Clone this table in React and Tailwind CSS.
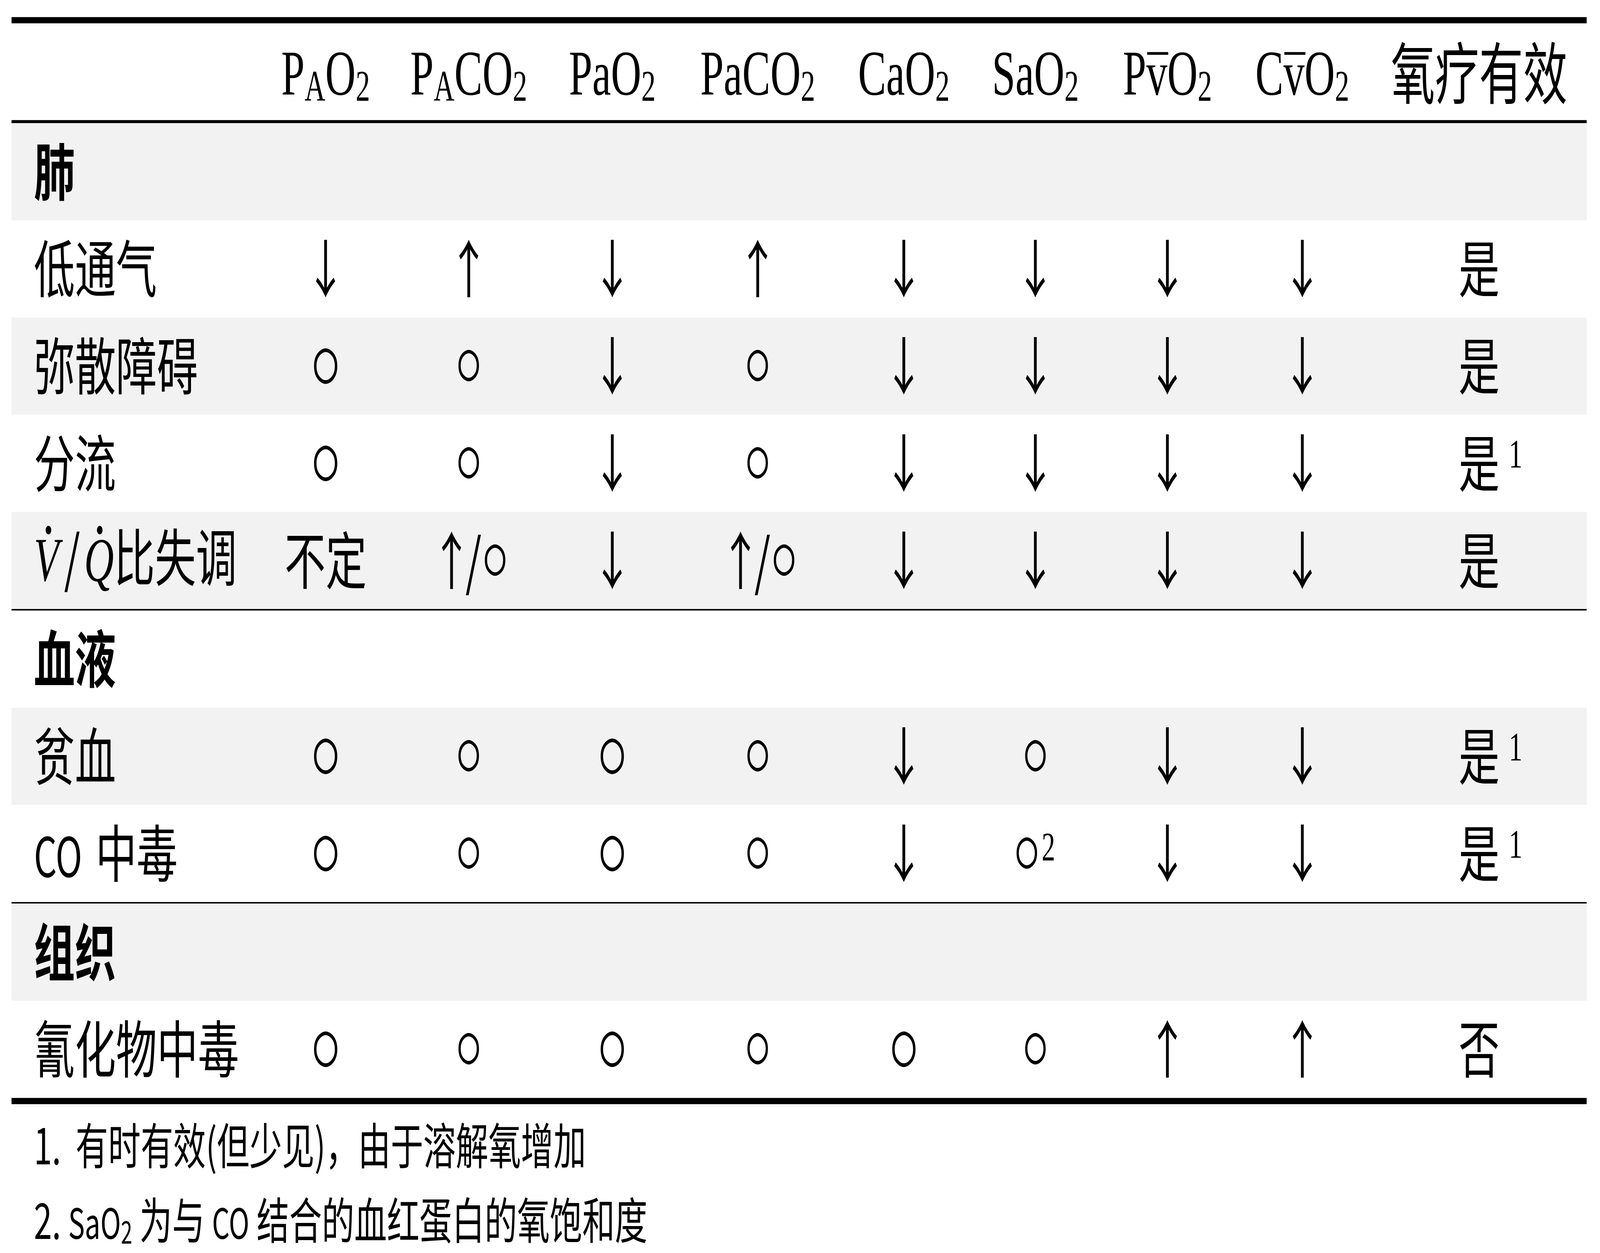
import React, { useEffect, useState } from "react";

const cjk = "font-['Noto_Sans_CJK_SC',sans-serif]";
const serif = "font-['Liberation_Serif',serif]";
const cols = "grid grid-cols-[946px_558px_558px_562px_572px_568px_458px_572px_480px_1fr]";

// the drawing is laid out on the reference's 6240 grid (3224 tall so the last
// footnote line keeps its descender); fit it to the window we actually get
function useFit() {
    const read = () =>
        typeof window === "undefined" ? [1, 1] : [window.innerWidth / 6240, window.innerHeight / 3224];
    const [fit, setFit] = useState(read);
    useEffect(() => {
        const onResize = () => setFit(read());
        window.addEventListener("resize", onResize);
        return () => window.removeEventListener("resize", onResize);
    }, []);
    return fit;
}

function Big() {
    return <span className="font-['DejaVu_Sans',sans-serif] text-[115px] [-webkit-text-stroke:3px_black]">○</span>;
}

function Small({ className = "" }) {
    return (
        <span className={`font-['DejaVu_Sans',sans-serif] text-[101px] [-webkit-text-stroke:3px_black] ${className}`}>○</span>
    );
}

function Mark({ v }) {
    if (v === "D") return <span className={cjk}>↓</span>;
    if (v === "U") return <span className={cjk}>↑</span>;
    if (v === "B") return <Big />;
    if (v === "S") return <Small />;
    if (v === "N") return <span className={cjk}>不定</span>;
    if (v === "US")
        return (
            <span className="flex items-center">
                <span className={`${cjk} tracking-[-26px]`}>↑</span>
                <span className={cjk}>/</span>
                <Small className="ml-[9px]" />
            </span>
        );
    if (v === "S2")
        return (
            <span className="flex items-center">
                <Small />
                <span className={`${serif} relative -top-[8px] ml-[14px] text-[105px]`}>2</span>
            </span>
        );
    return null;
}

function Answer({ text, note }) {
    return (
        <span className={`${cjk} relative inline-block`}>
            {text}
            {note && (
                <span className={`${serif} absolute left-full top-[13px] ml-[36px] text-[105px] leading-none`}>1</span>
            )}
        </span>
    );
}

const rows = [
    { group: "肺" },
    { label: "低通气", cells: ["D", "U", "D", "U", "D", "D", "D", "D"], answer: "是" },
    { label: "弥散障碍", cells: ["B", "S", "D", "S", "D", "D", "D", "D"], answer: "是" },
    { label: "分流", cells: ["B", "S", "D", "S", "D", "D", "D", "D"], answer: "是", note: true },
    { label: "vq", cells: ["N", "US", "D", "US", "D", "D", "D", "D"], answer: "是", lineAfter: true },
    { group: "血液" },
    { label: "贫血", cells: ["B", "S", "B", "S", "D", "S", "D", "D"], answer: "是", note: true },
    { label: "co", cells: ["B", "S", "B", "S", "D", "S2", "D", "D"], answer: "是", note: true, lineAfter: true },
    { group: "组织" },
    { label: "氰化物中毒", cells: ["B", "S", "B", "S", "B", "S", "U", "U"], answer: "否" },
];

function Label({ label }) {
    if (label === "vq") {
        return (
            <span>
                <span className={`${serif} relative italic`}>
                    V
                    <span className="absolute left-[46px] top-[2px] h-[22px] w-[22px] rounded-full bg-black" />
                </span>
                <span className={`${cjk} ml-[20px]`}>/</span>
                <span className={`${serif} relative ml-[16px] italic`}>
                    Q
                    <span className="absolute left-[50px] top-[2px] h-[22px] w-[22px] rounded-full bg-black" />
                </span>
                <span className={cjk}>比失调</span>
            </span>
        );
    }
    if (label === "co") {
        return (
            <span className={cjk}>
                <span className="text-[140px]">CO</span>
                <span className="ml-[52px]">中毒</span>
            </span>
        );
    }
    return <span className={cjk}>{label}</span>;
}

function HeaderSym({ children }) {
    return (
        <div className={`${serif} flex items-center justify-center pt-[26px] text-[164px]`}>
            <span>{children}</span>
        </div>
    );
}

function Sub({ children }) {
    return <span className="align-[-16px] text-[112px] leading-none">{children}</span>;
}

function Bar({ children }) {
    return (
        <span className="relative">
            {children}
            <span className="absolute left-[4px] right-[-4px] top-[37px] h-[7px] bg-black" />
        </span>
    );
}

export default function App() {
    const [sx, sy] = useFit();

    return (
        <div className="h-screen w-screen overflow-hidden bg-white">
            <div
                className="h-[3224px] w-[6240px] origin-top-left pl-[45px] pt-[44px] text-black"
                style={{ transform: `scale(${sx}, ${sy})` }}
            >
                <div className="w-[6143px] text-[160px] leading-none">
                    <div className="h-[16px] bg-black" />
                    <div className={`${cols} h-[249px] pb-[13px]`}>
                        <div />
                        <HeaderSym>P<Sub>A</Sub>O<Sub>2</Sub></HeaderSym>
                        <HeaderSym>P<Sub>A</Sub>CO<Sub>2</Sub></HeaderSym>
                        <HeaderSym>PaO<Sub>2</Sub></HeaderSym>
                        <HeaderSym>PaCO<Sub>2</Sub></HeaderSym>
                        <HeaderSym>CaO<Sub>2</Sub></HeaderSym>
                        <HeaderSym>SaO<Sub>2</Sub></HeaderSym>
                        <HeaderSym>P<Bar>v</Bar>O<Sub>2</Sub></HeaderSym>
                        <HeaderSym>C<Bar>v</Bar>O<Sub>2</Sub></HeaderSym>
                        <div className={`${cjk} flex items-center justify-center pl-[30px] text-[172px]`}>氧疗有效</div>
                    </div>
                    <div className="h-[8px] bg-black" />
                    {rows.map((row, i) => (
                        <React.Fragment key={i}>
                            <div className={`${cols} h-[250px] pb-[20px] ${i % 2 === 0 ? "bg-[#f2f2f2]" : "bg-white"}`}>
                                {row.group ? (
                                    <div className={`${cjk} col-span-10 flex items-center pl-[87px] font-bold`}>{row.group}</div>
                                ) : (
                                    <>
                                        <div className="flex items-center pl-[87px]">
                                            <Label label={row.label} />
                                        </div>
                                        {row.cells.map((c, j) => (
                                            <div key={j} className="flex items-center justify-center">
                                                <Mark v={c} />
                                            </div>
                                        ))}
                                        <div className="flex items-center justify-center pl-[30px]">
                                            <Answer text={row.answer} note={row.note} />
                                        </div>
                                    </>
                                )}
                            </div>
                            {row.lineAfter && <div className="h-[4px] bg-black" />}
                        </React.Fragment>
                    ))}
                    <div className="h-[16px] bg-black" />
                </div>
                <div className={`${cjk} pl-[87px] text-[127px] leading-[150px]`}>
                    <div className="mt-[25px]">
                        1.<span className="ml-[57px]">有时有效(但少见)，由于溶解氧增加</span>
                    </div>
                    <div className="mt-[42px]">
                        2.{" "}
                        <span className="text-[108px]">
                            SaO<span className="align-[-12px] text-[80px] leading-none">2</span>
                        </span>{" "}
                        为与 <span className="text-[108px]">CO</span> 结合的血红蛋白的氧饱和度
                    </div>
                </div>
            </div>
        </div>
    );
}
